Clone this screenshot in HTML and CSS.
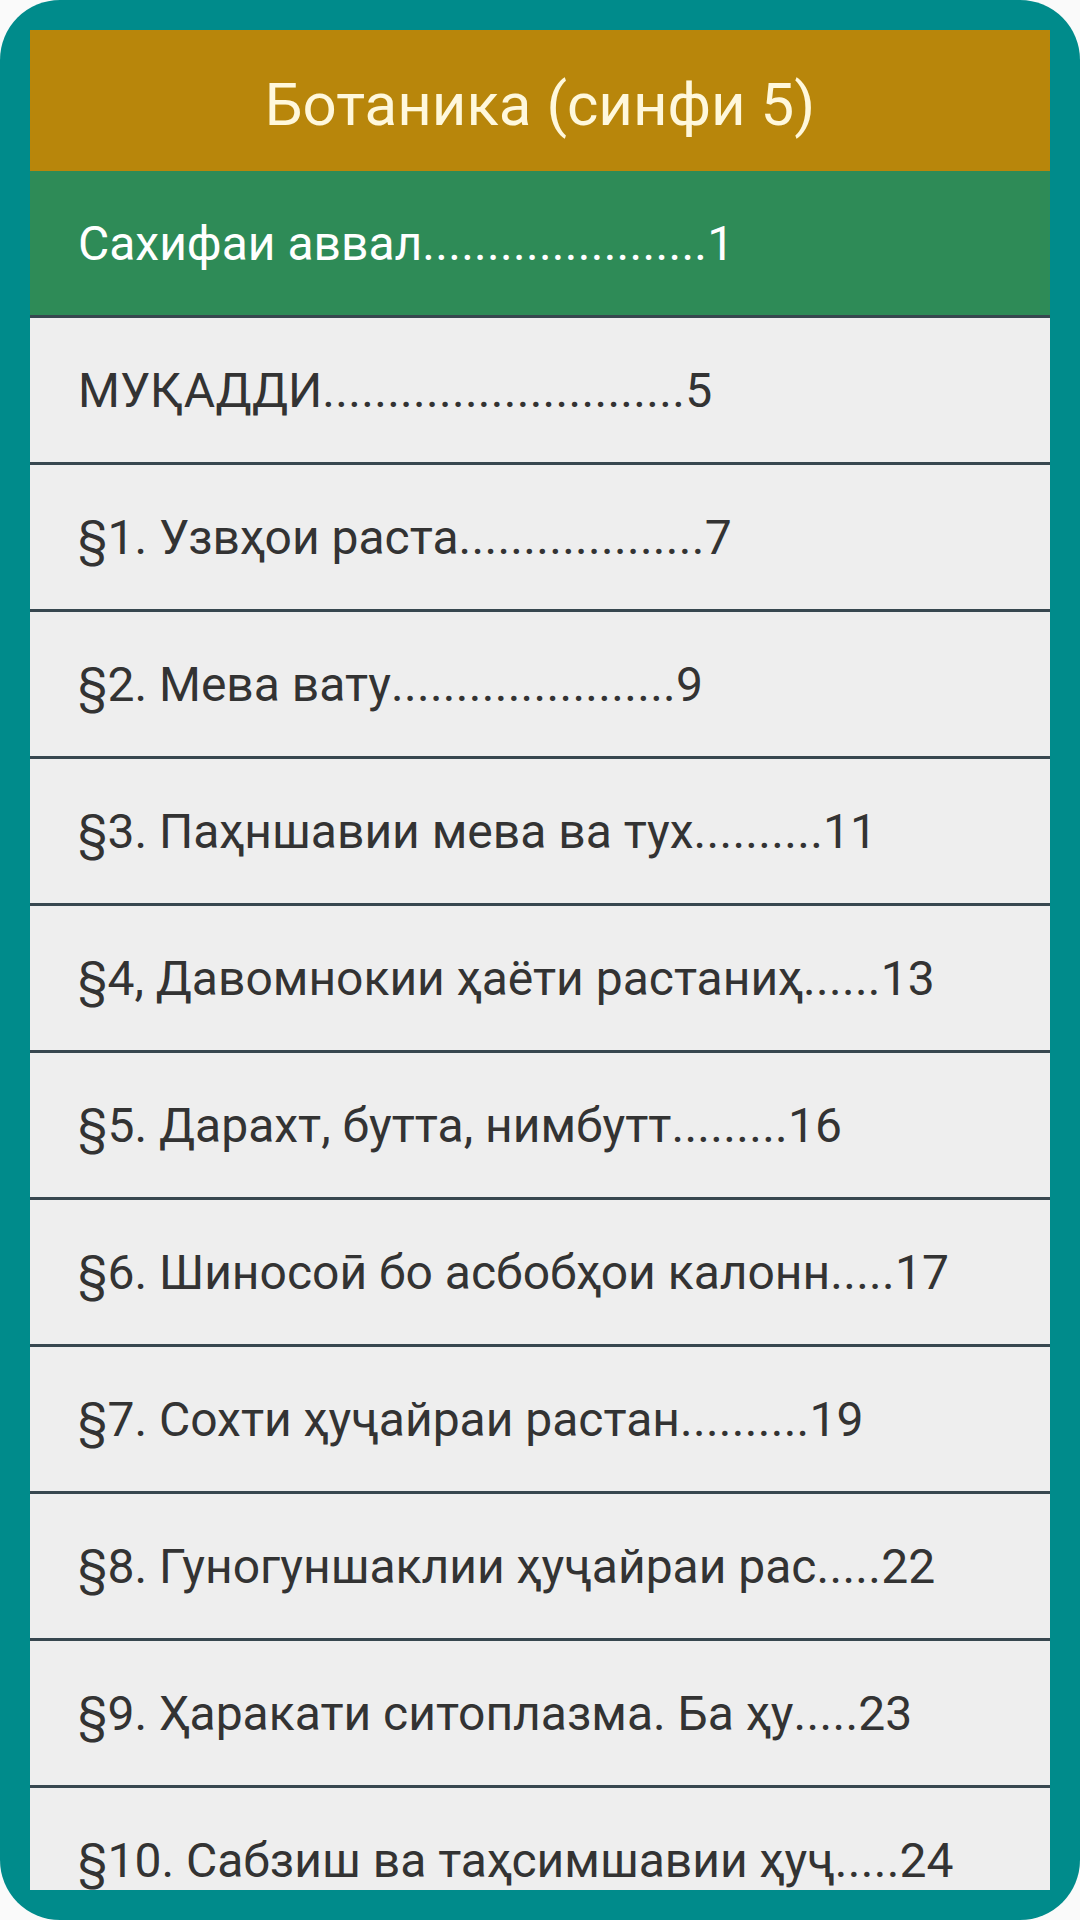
FILE: index.html
```html
<!DOCTYPE html>
<html lang="tg">

<head>
    <meta charset="UTF-8">
    <meta name="viewport" content="width=device-width, initial-scale=1.0">
    <title>Ботаника (синфи 5)</title>
    <link rel="stylesheet" href="styles.css">
</head>

<body>
    <div class="frame">
        <div class="screen">
            <div class="title">Ботаника (синфи 5)</div>
            <ul class="contents">
                <li class="item active">Сахифаи аввал<span class="leader">......................</span>1</li>
                <li class="item">МУҚАДДИ<span class="leader">............................</span>5</li>
                <li class="item">§1. Узвҳои раста<span class="leader">...................</span>7</li>
                <li class="item">§2. Мева вату<span class="leader">......................</span>9</li>
                <li class="item">§3. Паҳншавии мева ва тух<span class="leader">..........</span>11</li>
                <li class="item">§4, Давомнокии ҳаёти растаниҳ<span class="leader">......</span>13</li>
                <li class="item">§5. Дарахт, бутта, нимбутт<span class="leader">.........</span>16</li>
                <li class="item">§6. Шиносоӣ бо асбобҳои калонн<span class="leader">.....</span>17</li>
                <li class="item">§7. Сохти ҳуҷайраи растан<span class="leader">..........</span>19</li>
                <li class="item">§8. Гуногуншаклии ҳуҷайраи рас<span class="leader">.....</span>22</li>
                <li class="item">§9. Ҳаракати ситоплазма. Ба ҳу<span class="leader">.....</span>23</li>
                <li class="item">§10. Сабзиш ва таҳсимшавии ҳуҷ<span class="leader">.....</span>24</li>
            </ul>
        </div>
    </div>
</body>

</html>
```

FILE: styles.css
```css
body {
    margin: 0;
    background-color: #fafafa;
    font-family: Roboto, "Noto Sans", sans-serif;
}

.frame {
    box-sizing: border-box;
    height: 1920px;
    padding: 30px;
    background-color: #008b8b;
    border-radius: 60px;
}

.screen {
    height: 100%;
    overflow: hidden;
    background-color: #eeeeee;
}

.title {
    box-sizing: border-box;
    height: 141px;
    padding-top: 7px;
    display: flex;
    justify-content: center;
    align-items: center;
    background-color: #b8860b;
    color: #fff8dc;
    font-size: 60px;
}

.contents {
    list-style: none;
    margin: 0;
    padding: 0;
}

.item {
    height: 144px;
    display: flex;
    align-items: center;
    padding-left: 48px;
    border-bottom: 3px solid #37474f;
    font-size: 48px;
    color: #333333;
    white-space: nowrap;
}

.item.active {
    background-color: #2e8b57;
    color: #ffffff;
}

.leader {
    letter-spacing: 0.3px;
}
```
